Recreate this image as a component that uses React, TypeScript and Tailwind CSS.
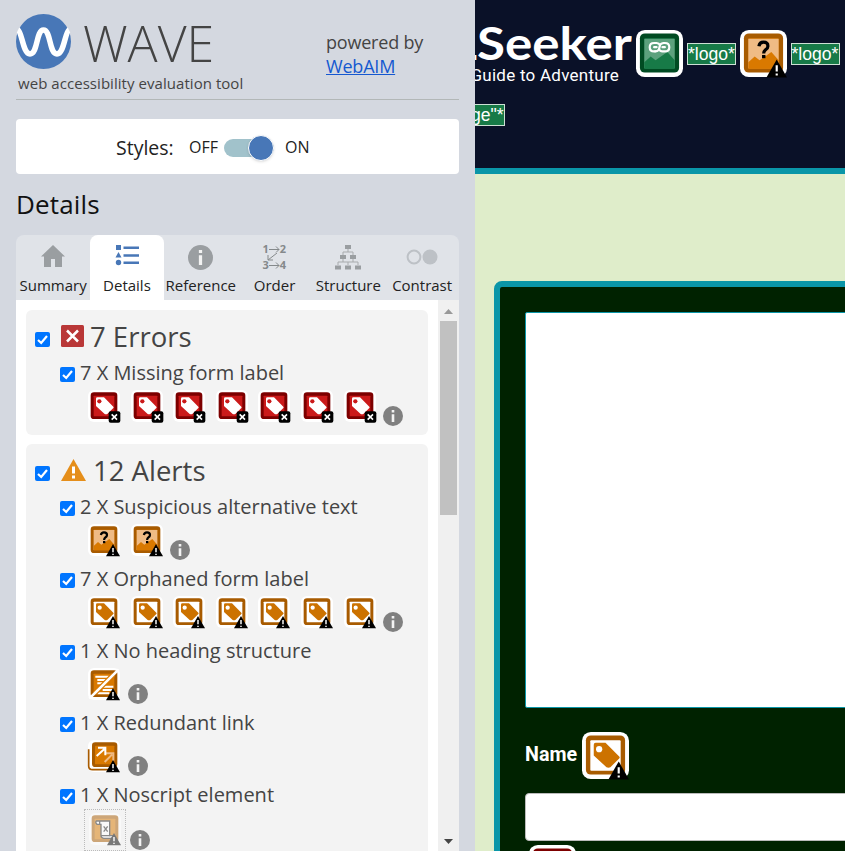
import React from "react";

type Kind = "error" | "suspicious" | "label" | "heading" | "redundant" | "noscript" | "feature";

const TAG = "M14 11H24L38 25Q39 26 38 27L29 36Q27 37 25 36L12 24V13Q12 11 14 11Z";

function WaveIcon({ kind, size = 32, className = "" }: { kind: Kind; size?: number; className?: string }) {
  const alert = kind !== "error" && kind !== "feature";
  const border = kind === "error" ? "#7d0000" : kind === "feature" ? "#004b22" : "#a85b00";
  const fill = kind === "error" ? "#cb1a1a" : kind === "feature" ? "#177a47" : kind === "label" ? "#fff" : "#d97900";
  return (
    <svg width={size} height={size} viewBox="0 0 48 48" className={"block shrink-0 overflow-visible " + className}>
      <rect width="48" height="48" rx="9" fill="#fff" />
      {kind === "redundant" && <path d="M1 14V39Q1 44.500 7 44.500H34" fill="none" stroke="#a85b00" strokeWidth="2.500" />}
      <g transform={kind === "redundant" ? "translate(2 0)" : undefined}>
        <rect x="4" y="3.500" width={kind === "redundant" ? 38 : 40} height={kind === "redundant" ? 37 : 40} rx="5" fill={border} />
        <rect x="8.500" y="8.500" width={kind === "redundant" ? 29 : 31} height={kind === "redundant" ? 28 : 31} rx="1" fill={fill} />
      </g>
      {kind === "error" && (
        <>
          <path d={TAG} fill="#fff" />
          <circle cx="17" cy="17" r="3.200" fill="#cb1a1a" />
          <rect x="31" y="32" width="17.500" height="17" rx="3" fill="#000" />
          <path d="M35.500 36.500l8 8M43.500 36.500l-8 8" stroke="#fff" strokeWidth="2.400" />
        </>
      )}
      {kind === "label" && (
        <>
          <path d={TAG} fill="#cc7200" />
          <circle cx="17.500" cy="17.500" r="3.200" fill="#fff" />
        </>
      )}
      {(kind === "suspicious" || kind === "feature") && (
        <>
          <rect x="8.500" y="9" width="31" height="30" fill={kind === "feature" ? "#5ca17d" : "#efbb85"} />
          <path d="M8.500 33L15 27L20 31L32 22.500L39.500 31V39.500H8.500Z" fill={kind === "feature" ? "#177a47" : "#d97900"} />
        </>
      )}
      {kind === "suspicious" && (
        <>
          <path d="M19.300 16.500Q20 12.500 24 12.500Q28.500 12.500 28.500 16.500Q28.500 18.700 26 20.300Q24.200 21.500 24.200 24" fill="none" stroke="#000" strokeWidth="3.300" />
          <rect x="22.500" y="25.500" width="3.500" height="3.300" fill="#000" />
        </>
      )}
      {kind === "feature" && (
        <g fill="none" stroke="#fff" strokeWidth="2.200" strokeLinecap="round">
          <path d="M19.500 21.800H18.500Q14 21.800 14 17.500Q14 13.300 18.500 13.300H21Q23.500 13.300 24.500 15.500M18.500 17.500H21" />
          <path d="M28.500 13.300H29.500Q34 13.300 34 17.500Q34 21.800 29.500 21.800H27Q24.500 21.800 23.500 19.500M27 17.500H29.500" />
          <path d="M19.500 21.800Q22.500 21.800 23.500 19.500L24.500 15.500Q25.500 13.300 28.500 13.300" />
        </g>
      )}
      {kind === "heading" && (
        <>
          <path d="M11 13H31M14 18H32M14 23H28M18 28H38M22 33H39M14 38H32" stroke="#fff" strokeWidth="3" />
          <path d="M10 38L38 10" stroke="#d97900" strokeWidth="7.500" />
          <path d="M2 46L46 2" stroke="#fff" strokeWidth="4" />
        </>
      )}
      {kind === "redundant" && (
        <g fill="none" strokeWidth="3">
          <path d="M25 33L36 22M27 20H38V31" stroke="#efbb85" />
          <path d="M13 24L25 13M15 11.500H26V23" stroke="#fff" />
        </g>
      )}
      {kind === "noscript" && (
        <g>
          <path d="M11 12H31V34H37Q37 38 32 38H22Q18 37 18 34V17H12Q9 14 11 12Z" fill="#fff" stroke="#222" strokeWidth="2" />
          <path d="M16 17V12M18 34H31M22 20l6 8M28 20l-6 8" fill="none" stroke="#222" strokeWidth="2" />
        </g>
      )}
      {alert && (
        <>
          <path d="M37.500 30L48 48.500H27Z" fill="#000" />
          <path d="M37.500 36V42.500M37.500 44.500V46.500" stroke="#fff" strokeWidth="2.200" />
        </>
      )}
    </svg>
  );
}

function Info({ size = 20, color = "#808080", className = "" }: { size?: number; color?: string; className?: string }) {
  return (
    <svg width={size} height={size} viewBox="0 0 20 20" className={"shrink-0 " + className}>
      <circle cx="10" cy="10" r="10" fill={color} />
      <path d="M8.700 4H11.300V6.400H8.700ZM8.700 8.200H11.300V16H8.700Z" fill="#f3f3f3" />
    </svg>
  );
}

function Check({ className = "" }: { className?: string }) {
  return (
    <svg width="15" height="15" viewBox="0 0 15 15" className={"shrink-0 " + className}>
      <rect width="15" height="15" rx="2" fill="#0075ff" />
      <path d="M3 8L6.200 11L12 4" fill="none" stroke="#fff" strokeWidth="2.200" />
    </svg>
  );
}

function Item({ text, kind, count, dim = false }: { text: string; kind: Kind; count: number; dim?: boolean }) {
  return (
    <div className="h-[72px] pl-[34px]">
      <div className="flex h-5 text-[20px] leading-[22px]">
        <Check className="mt-[5px]" />
        <span className="ml-[5px] whitespace-nowrap">{text}</span>
      </div>
      {dim ? (
        <div className="ml-6 mt-[5px] flex">
          <div className="flex h-[42px] w-[42px] justify-center border border-dotted border-[#bbb] pt-[3px]">
            <WaveIcon kind={kind} className="opacity-50" />
          </div>
          <Info className="ml-[4px] mt-[21px]" />
        </div>
      ) : (
        <div className="ml-[28px] mt-2 flex">
          <div className="flex gap-[10.600px]">
            {Array.from({ length: count }, (_, i) => (
              <WaveIcon key={i} kind={kind} />
            ))}
          </div>
          <Info className="ml-[7.500px] mt-[16px]" />
        </div>
      )}
    </div>
  );
}

function Group({ title, icon, children, className }: { title: string; icon: React.ReactNode; children: React.ReactNode; className: string }) {
  return (
    <section className={"w-[402px] rounded-md bg-[#f3f3f3] " + className}>
      <h2 className="flex h-[52px] pl-[9px] text-[27.500px] leading-[54px]">
        <Check className="mt-[22px]" />
        {icon}
        <span className="whitespace-nowrap">{title}</span>
      </h2>
      {children}
    </section>
  );
}

function Tab({ label, active = false, children }: { label: string; active?: boolean; children: React.ReactNode }) {
  return (
    <div className={"flex w-[73.800px] flex-col items-center rounded-t-lg " + (active ? "bg-white" : "")}>
      <div className="flex h-[44px] items-center">{children}</div>
      <div className="ml-[0.500px] whitespace-nowrap text-[15px] leading-[12px] text-[#222]">{label}</div>
    </div>
  );
}

function AltLabel({ text, className = "" }: { text: string; className?: string }) {
  return (
    <span className={"block h-[22px] shrink-0 whitespace-nowrap border border-[#cde0d4] bg-[#177a47] font-['Liberation_Sans',Arial,sans-serif] text-[17.600px] leading-5 text-white " + className}>
      {text}
    </span>
  );
}

export default function App() {
  return (
    <div className="flex h-[851px] w-[845px] overflow-hidden bg-[#d4d8e0] font-['Open_Sans','Noto_Sans',sans-serif] text-[#444]">
      <aside className="h-[851px] w-[475px] shrink-0 pl-4">
        <header className="flex h-[100px] w-[443px] border-b border-[#b2b7b7]">
          <div className="w-[310px] pt-[14px]">
            <div className="flex h-[56px]">
              <svg width="55" height="55" viewBox="0 0 55 55">
                <circle cx="27.500" cy="27.500" r="27.500" fill="#4877b7" />
                <path d="M2 16C6 18 7 40 14 40C22 40 20 16 27.500 16C35 16 33 40 41 40C48 40 49 18 53 16" fill="none" stroke="#fff" strokeWidth="5.500" />
              </svg>
              <span className="ml-[12px] whitespace-nowrap text-[50px] font-light leading-[58px]">WAVE</span>
            </div>
            <div className="ml-[2px] whitespace-nowrap text-[15px] leading-[26px] tracking-[0.050px]">web accessibility evaluation tool</div>
          </div>
          <div className="whitespace-nowrap pt-[30px] text-[18px] leading-6 tracking-[-0.200px]">
            <div>powered by</div>
            <div className="text-[#1558d0] underline">WebAIM</div>
          </div>
        </header>
        <div className="mt-[19px] flex h-[55px] w-[443px] items-center rounded bg-white pl-[100px] text-[#222]">
          <span className="mt-[2px] w-[73px] text-[19.500px] leading-7">Styles:</span>
          <span className="w-[35px] text-[16px]">OFF</span>
          <span className="mt-[3px] flex h-[18px] w-[50px] items-center justify-end rounded-full bg-[#a1c2cb]">
            <span className="h-[26px] w-[26px] shrink-0 rounded-full border border-white bg-[#4877b7] shadow" />
          </span>
          <span className="ml-[11px] text-[16px]">ON</span>
        </div>
        <h1 className="h-[61px] pt-[10px] text-[26px] leading-[40px] tracking-[0.150px] text-[#111]">Details</h1>
        <nav className="flex h-[65px] w-[443px] rounded-t-lg bg-[#e0e3e8]">
          <Tab label="Summary">
            <svg width="24" height="22" viewBox="0 0 24 22" className="-mt-[2px]" fill="#9a9ea1"><path d="M12 0L24 11.500H21V22H14V14H10V22H3V11.500H0Z" /></svg>
          </Tab>
          <Tab label="Details" active>
            <svg width="24" height="21" viewBox="0 0 24 21" fill="#4877b7" className="-mt-1"><path d="M1 0H6V5H1ZM3.500 7L6.500 12.500H.500ZM8.500 1.500H24V4H8.500ZM8.500 9.300H24V11.700H8.500ZM8.500 16.500H24V19H8.500Z" /><circle cx="3.500" cy="17.500" r="2.700" /></svg>
          </Tab>
          <Tab label="Reference"><Info size={25} color="#9a9ea1" /></Tab>
          <Tab label="Order">
            <div className="flex h-[26px] flex-col justify-between text-[11px] font-bold leading-[10px] text-[#85898b]">
              <div className="flex items-center">1<svg width="11" height="7" fill="none" stroke="currentColor"><path d="M0 3.500H10M7 .500L10 3.500L7 6.500" /></svg>2</div>
              <svg width="12" height="8" className="absolute ml-[5px] mt-[9px]" fill="none" stroke="currentColor"><path d="M10 0L1 7M1 2V7H6" /></svg>
              <div className="flex items-center">3<svg width="11" height="7" fill="none" stroke="currentColor"><path d="M0 3.500H10M7 .500L10 3.500L7 6.500" /></svg>4</div>
            </div>
          </Tab>
          <Tab label="Structure">
            <svg width="26" height="25" viewBox="0 0 26 25"><path d="M10 0H16V4H10ZM5 10H11V14H5ZM15 10H21V14H15ZM0 20.500H6V24.500H0ZM10 20.500H16V24.500H10ZM20 20.500H26V24.500H20Z" fill="#9a9ea1" /><path d="M13 4V7M8 10V7H18V10M8 14V17M18 14V17M3 20V17H23V20M13 17V20" fill="none" stroke="#a8abad" /></svg>
          </Tab>
          <Tab label="Contrast">
            <svg width="32" height="16" viewBox="0 0 32 16"><circle cx="8" cy="8" r="6.400" fill="none" stroke="#bdc1c6" strokeWidth="2" /><circle cx="24" cy="8" r="7.500" fill="#bdc1c6" /></svg>
          </Tab>
        </nav>
        <div className="flex h-[551px] w-[443px] bg-white">
          <div className="w-[422px] overflow-hidden pl-[10px] pt-[10px]">
            <Group title="7 Errors" className="h-[125px]" icon={<svg width="23" height="22" viewBox="0 0 23 22" className="ml-[11px] mr-[6px] mt-[15px]"><rect width="23" height="22" rx="1.500" fill="#b93737" /><path d="M6 5.500L17 16.500M17 5.500L6 16.500" stroke="#fff" strokeWidth="2.500" /></svg>}>
              <Item text="7 X Missing form label" kind="error" count={7} />
            </Group>
            <Group title="12 Alerts" className="mt-[9px] h-[500px]" icon={<svg width="25" height="22" viewBox="0 0 25 22" className="ml-[11px] mr-[7px] mt-[15px]"><path d="M12.500 0L25 22H0Z" fill="#e58e1a" /><path d="M11 7.500H14V14.500H11ZM11 16.500H14V19.500H11Z" fill="#fff" /></svg>}>
              <Item text="2 X Suspicious alternative text" kind="suspicious" count={2} />
              <Item text="7 X Orphaned form label" kind="label" count={7} />
              <Item text="1 X No heading structure" kind="heading" count={1} />
              <Item text="1 X Redundant link" kind="redundant" count={1} />
              <Item text="1 X Noscript element" kind="noscript" count={1} dim />
            </Group>
          </div>
          <div className="flex w-[21px] flex-col items-center bg-[#f0f0f0]">
            <svg width="9" height="5" className="mt-[9px]"><path d="M0 5L4.500 0L9 5Z" fill="#999" /></svg>
            <div className="mt-[7px] h-[194px] w-[17px] bg-[#c1c1c1]" />
            <svg width="9" height="5" className="mb-[7px] mt-auto"><path d="M0 0H9L4.500 5Z" fill="#444" /></svg>
          </div>
        </div>
      </aside>
      <main className="h-[851px] w-[370px] shrink-0 overflow-hidden bg-[#dfedca] font-[Roboto,sans-serif]">
        <header className="h-[174px] overflow-hidden border-b-[6px] border-[#0a96a8] bg-[#0a1128] text-white">
          <div className="flex h-[104px]">
            <div className="flex h-[104px] w-[157px] shrink-0 flex-col items-end overflow-hidden pt-[20px]">
              <span className="origin-right scale-x-[1.135] whitespace-nowrap font-[Lato,sans-serif] text-[45px] font-bold leading-[46px]">LSeeker</span>
              <span className="mr-[13px] whitespace-nowrap text-[17px] leading-[18px] tracking-[0.250px]">Guide to Adventure</span>
            </div>
            <WaveIcon kind="feature" size={47} className="ml-[4px] mt-[30px]" />
            <AltLabel text="*logo*" className="ml-[4px] mt-[43px] w-[49px]" />
            <WaveIcon kind="suspicious" size={47} className="ml-[3.500px] mt-[30px]" />
            <AltLabel text="*logo*" className="ml-[4px] mt-[43px] w-[49px]" />
          </div>
          <AltLabel text={'ge"*'} className="ml-[-5px] w-[35px]" />
        </header>
        <section className="ml-[19px] mt-[107px] h-[600px] w-[370px] rounded-lg border-[6px] border-[#0a96a8] bg-[#002200] pl-[25px] pt-[25px]">
          <div className="h-[396px] w-[360px] rounded-[2px] border border-[#0a96a8] bg-white" />
          <div className="flex h-[85px] pt-[24px]">
            <span className="w-[57px] whitespace-nowrap pt-[12px] text-[19.700px] font-bold leading-[22px] text-white">Name</span>
            <WaveIcon kind="label" size={47} />
          </div>
          <div className="h-[48px] w-[360px] rounded border border-[#bbb] bg-white" />
          <WaveIcon kind="error" size={47} className="ml-[4px] mt-[4px]" />
        </section>
      </main>
    </div>
  );
}
